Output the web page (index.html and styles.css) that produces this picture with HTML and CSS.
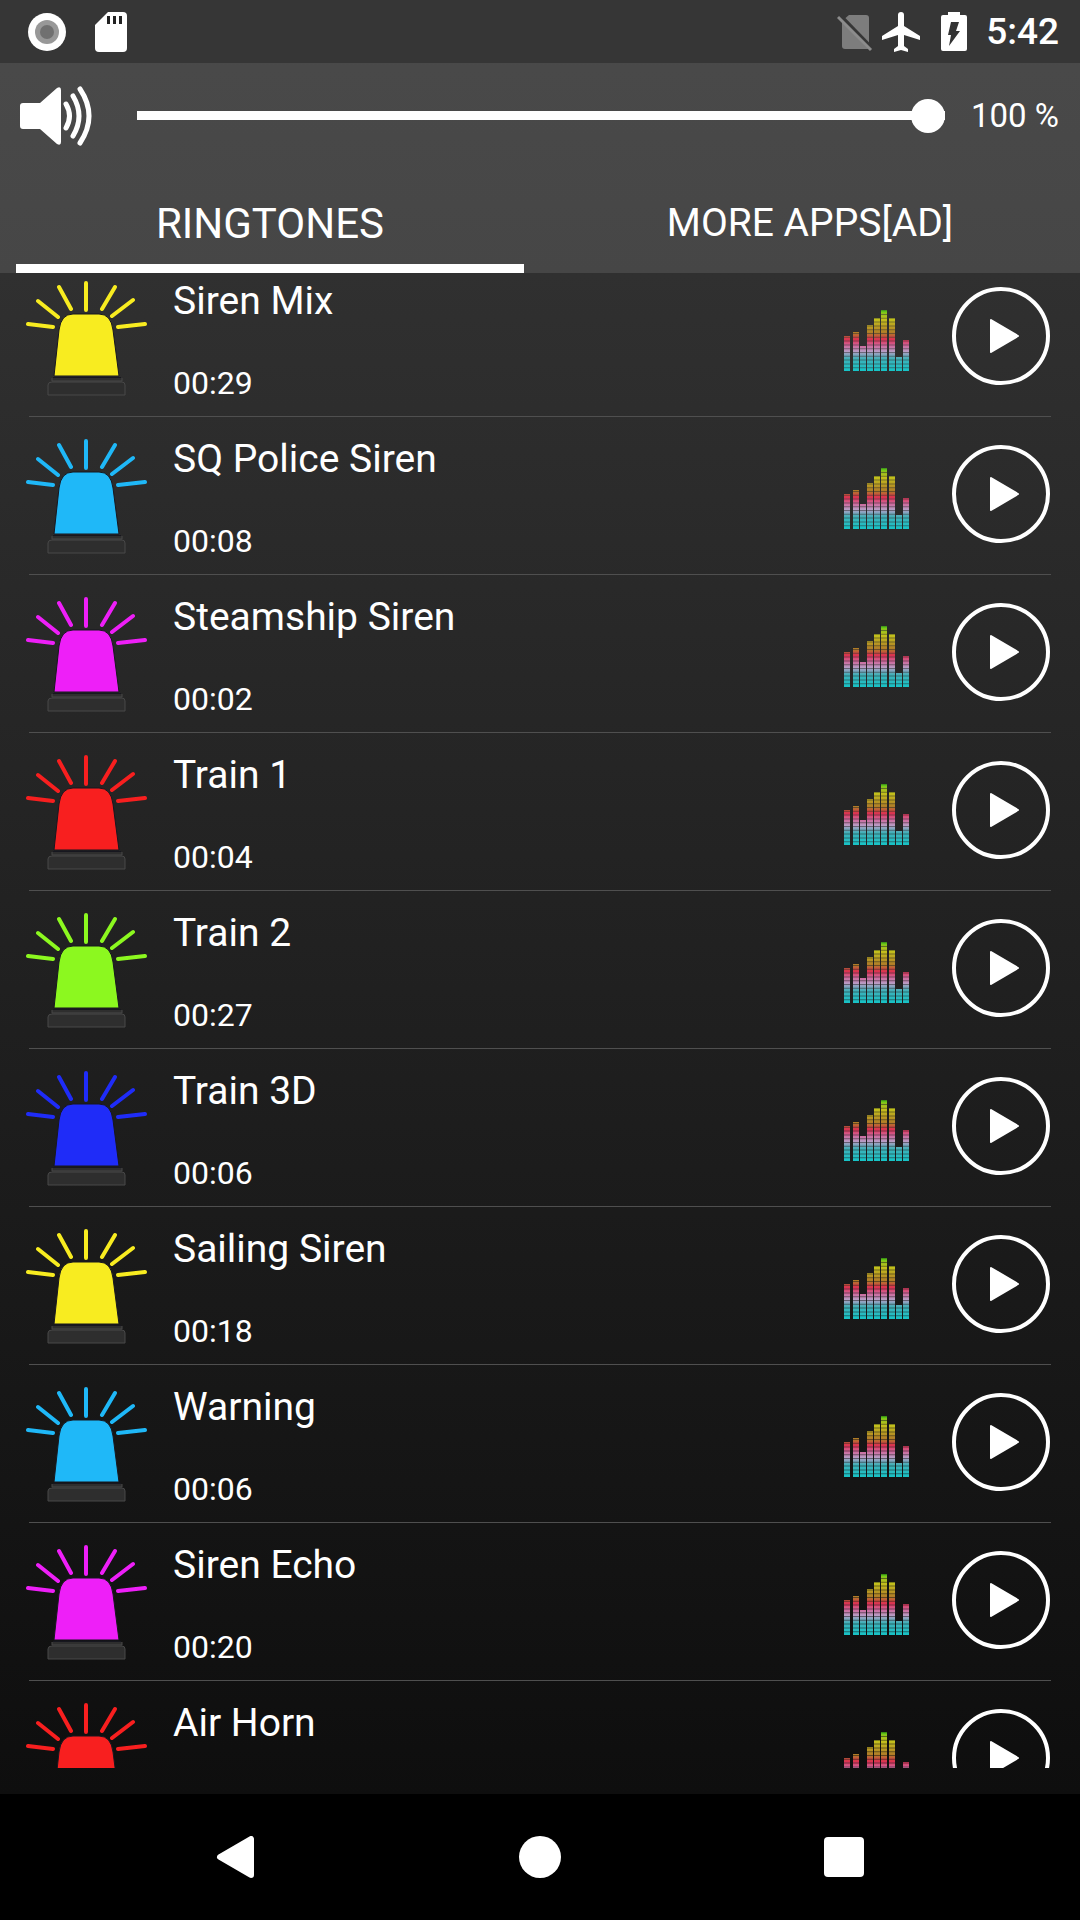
FILE: index.html
```html
<!DOCTYPE html>
<html lang="en">
  <head>
    <meta charset="UTF-8" />
    <meta name="viewport" content="width=device-width, initial-scale=1.0" />
    <title>Siren Ringtones</title>
    <link rel="stylesheet" href="styles.css">
  </head>
  <body>
    <svg class="sprite" aria-hidden="true">
      <defs>
        <linearGradient id="levels" gradientUnits="userSpaceOnUse" x1="0" y1="61" x2="0" y2="0">
          <stop offset="0" stop-color="#16c3c6" />
          <stop offset="0.2" stop-color="#3fb0b8" />
          <stop offset="0.32" stop-color="#b79cc4" />
          <stop offset="0.42" stop-color="#d0659a" />
          <stop offset="0.52" stop-color="#dd3050" />
          <stop offset="0.62" stop-color="#b07a28" />
          <stop offset="0.85" stop-color="#c3c21c" />
          <stop offset="0.94" stop-color="#8fbf1c" />
          <stop offset="1" stop-color="#4be010" />
        </linearGradient>
        <path id="bars" d="M3 61V26M12 61V22M19 61V36M26 61V15M33 61V8M40 61V0M48 61V8M55 61V47M62 61V30" />
      </defs>
      <symbol id="siren" viewBox="0 0 122 120">
        <path d="M2 43L27 46M12 20L32 36M33 6L45 28M60 2V29M89 6L76 28M107 19L86 35M119 43L92 46" fill="none" stroke="currentColor" stroke-width="4" stroke-linecap="round" />
        <path d="M28 95L33 49Q35 33 47 33H73Q85 33 87 49L93 95Z" fill="currentColor" stroke="#17171f" stroke-width="1" />
        <path d="M27 96H95V99H27Z" fill="#17171f" />
        <path d="M26 97V100H96V97M22 114V104Q22 101 26 101H96Q99 101 99 104V114Z" fill="#2e2e2e" stroke="#484848" stroke-width="1" />
      </symbol>
      <symbol id="equalizer" viewBox="0 0 66 61">
        <g fill="none" stroke="url(#levels)" stroke-width="6">
          <use href="#bars" stroke-opacity="0.5" />
          <use href="#bars" stroke-dasharray="2.8 1" />
        </g>
      </symbol>
      <symbol id="play" viewBox="0 0 100 100">
        <circle cx="50" cy="50" r="47" fill="none" stroke="#fff" stroke-width="4" />
        <path d="M40 34L67 50L40 66Z" fill="#fff" stroke="#fff" stroke-width="2" stroke-linejoin="round" />
      </symbol>
    </svg>

    <header>
      <div class="statusBar">
        <svg width="40" height="40" viewBox="0 0 40 40">
          <circle cx="20" cy="20" r="19" fill="#fff" />
          <circle cx="20" cy="20" r="12" fill="#989898" />
          <circle cx="20" cy="20" r="7" fill="#707070" />
        </svg>
        <svg class="sdCard" width="32" height="40" viewBox="0 0 32 40">
          <path d="M13 0H28Q32 0 32 4V36Q32 40 28 40H4Q0 40 0 36V13Z" fill="#fff" />
          <path d="M12 4H15V12H12ZM18 4H21V12H18ZM24 4H27V12H24Z" fill="#222" />
        </svg>
        <div class="statusRight">
          <svg width="36" height="40" viewBox="0 0 36 40">
            <path d="M12 3H29Q32 3 32 6V37H8Q5 37 5 34V9Z" fill="#7d7d7d" />
            <path d="M2 3L36 38" stroke="#363636" stroke-width="5" />
            <path d="M1 5L34 38" stroke="#8c8c8c" stroke-width="3" />
          </svg>
          <svg width="40" height="40" viewBox="0 0 40 40">
            <path d="M39 28V24L23 14V3A3 3 0 0 0 17 3V14L1 24V28L17 23V34L13 37V40L20 38L27 40V37L23 34V23Z" fill="#fff" />
          </svg>
          <svg class="battery" width="26" height="40" viewBox="0 0 26 40">
            <path d="M7 0H19V3H24Q26 3 26 5V37Q26 39 24 39H2Q0 39 0 37V5Q0 3 2 3H7Z" fill="#fff" />
            <path d="M10 10H18L15 19H19L8 34L10 23H7Z" fill="#333" />
          </svg>
          <span class="clock">5:42</span>
        </div>
      </div>

      <div class="volume">
        <svg width="76" height="60" viewBox="0 0 76 60">
          <path d="M5 17H22L39 2Q43 0 43 4V56Q43 60 39 58L22 43H5Q2 43 2 40V20Q2 17 5 17Z" fill="#fff" />
          <path d="M48 18Q55 30 48 42M55 10Q67 30 55 50M62 3Q80 30 62 57" fill="none" stroke="#fff" stroke-width="5" stroke-linecap="round" />
        </svg>
        <input type="range" min="0" max="100" value="100" aria-label="Volume" />
        <span>100 %</span>
      </div>

      <nav class="tabs">
        <button class="tab active" type="button">RINGTONES</button>
        <button class="tab" type="button">MORE APPS[AD]</button>
      </nav>
    </header>

    <main>
      <ul class="toneList">
        <li class="yellow">
          <svg class="siren"><use href="#siren" /></svg>
          <div class="toneText"><h2>Siren Mix</h2><p>00:29</p></div>
          <svg class="equalizer"><use href="#equalizer" /></svg>
          <button class="play" type="button" aria-label="Play Siren Mix"><svg><use href="#play" /></svg></button>
        </li>
        <li class="cyan">
          <svg class="siren"><use href="#siren" /></svg>
          <div class="toneText"><h2>SQ Police Siren</h2><p>00:08</p></div>
          <svg class="equalizer"><use href="#equalizer" /></svg>
          <button class="play" type="button" aria-label="Play SQ Police Siren"><svg><use href="#play" /></svg></button>
        </li>
        <li class="magenta">
          <svg class="siren"><use href="#siren" /></svg>
          <div class="toneText"><h2>Steamship Siren</h2><p>00:02</p></div>
          <svg class="equalizer"><use href="#equalizer" /></svg>
          <button class="play" type="button" aria-label="Play Steamship Siren"><svg><use href="#play" /></svg></button>
        </li>
        <li class="red">
          <svg class="siren"><use href="#siren" /></svg>
          <div class="toneText"><h2>Train 1</h2><p>00:04</p></div>
          <svg class="equalizer"><use href="#equalizer" /></svg>
          <button class="play" type="button" aria-label="Play Train 1"><svg><use href="#play" /></svg></button>
        </li>
        <li class="green">
          <svg class="siren"><use href="#siren" /></svg>
          <div class="toneText"><h2>Train 2</h2><p>00:27</p></div>
          <svg class="equalizer"><use href="#equalizer" /></svg>
          <button class="play" type="button" aria-label="Play Train 2"><svg><use href="#play" /></svg></button>
        </li>
        <li class="blue">
          <svg class="siren"><use href="#siren" /></svg>
          <div class="toneText"><h2>Train 3D</h2><p>00:06</p></div>
          <svg class="equalizer"><use href="#equalizer" /></svg>
          <button class="play" type="button" aria-label="Play Train 3D"><svg><use href="#play" /></svg></button>
        </li>
        <li class="yellow">
          <svg class="siren"><use href="#siren" /></svg>
          <div class="toneText"><h2>Sailing Siren</h2><p>00:18</p></div>
          <svg class="equalizer"><use href="#equalizer" /></svg>
          <button class="play" type="button" aria-label="Play Sailing Siren"><svg><use href="#play" /></svg></button>
        </li>
        <li class="cyan">
          <svg class="siren"><use href="#siren" /></svg>
          <div class="toneText"><h2>Warning</h2><p>00:06</p></div>
          <svg class="equalizer"><use href="#equalizer" /></svg>
          <button class="play" type="button" aria-label="Play Warning"><svg><use href="#play" /></svg></button>
        </li>
        <li class="magenta">
          <svg class="siren"><use href="#siren" /></svg>
          <div class="toneText"><h2>Siren Echo</h2><p>00:20</p></div>
          <svg class="equalizer"><use href="#equalizer" /></svg>
          <button class="play" type="button" aria-label="Play Siren Echo"><svg><use href="#play" /></svg></button>
        </li>
        <li class="red">
          <svg class="siren"><use href="#siren" /></svg>
          <div class="toneText"><h2>Air Horn</h2></div>
          <svg class="equalizer"><use href="#equalizer" /></svg>
          <button class="play" type="button" aria-label="Play Air Horn"><svg><use href="#play" /></svg></button>
        </li>
      </ul>
    </main>

    <footer>
      <button type="button" aria-label="Back">
        <svg width="42" height="42" viewBox="0 0 42 42">
          <path d="M5 21L36 3V39Z" fill="#fff" stroke="#fff" stroke-width="6" stroke-linejoin="round" />
        </svg>
      </button>
      <button type="button" aria-label="Home">
        <svg width="42" height="42" viewBox="0 0 42 42">
          <circle cx="21" cy="21" r="21" fill="#fff" />
        </svg>
      </button>
      <button type="button" aria-label="Recent apps">
        <svg width="42" height="42" viewBox="0 0 42 42">
          <rect x="1" y="1" width="40" height="40" rx="4" fill="#fff" />
        </svg>
      </button>
    </footer>
  </body>
</html>
```
FILE: styles.css
```css
* {
  box-sizing: border-box;
}

body {
  margin: 0;
  height: 100vh;
  display: flex;
  flex-direction: column;
  background: #000;
  font-family: Roboto, 'Liberation Sans', sans-serif;
  color: #fff;
}

svg {
  display: block;
  flex: none;
}

.sprite {
  position: absolute;
  width: 0;
  height: 0;
}

button {
  border: 0;
  padding: 0;
  background: none;
  color: inherit;
  font-family: inherit;
}

header {
  flex: none;
  background: linear-gradient(#4a4a4a, #464646);
}

.statusBar {
  display: flex;
  align-items: center;
  height: 63px;
  padding: 0 21px 0 27px;
  background-color: #363636;
}

.sdCard {
  margin-left: 28px;
}

.statusRight {
  display: flex;
  align-items: center;
  gap: 8px;
  margin-left: auto;
}

.battery {
  margin: 0 11px 0 12px;
}

.clock {
  font-size: 37px;
  font-weight: 500;
  line-height: 40px;
}

.volume {
  display: flex;
  align-items: center;
  height: 105px;
  padding: 0 21px 0 18px;
  font-size: 33px;
}

.volume input {
  appearance: none;
  flex: 1;
  min-width: 0;
  height: 34px;
  margin: 0 26px 0 43px;
  background: linear-gradient(#fff, #fff) center / 100% 9px no-repeat;
  border-radius: 5px;
}

.volume input::-webkit-slider-thumb {
  appearance: none;
  width: 34px;
  height: 34px;
  border-radius: 50%;
  background-color: #fff;
}

.tabs {
  display: flex;
  gap: 32px;
  height: 105px;
  padding: 0 16px;
}

.tab {
  flex: 1;
  padding-top: 14px;
  border-bottom: 9px solid transparent;
  font-size: 39px;
}

.active {
  border-bottom-color: #fff;
  font-size: 42px;
}

main {
  flex: 1;
  min-height: 0;
  padding-bottom: 26px;
  background: linear-gradient(#303030, #0e0e0e);
}

.toneList {
  display: flex;
  flex-direction: column;
  gap: 22px;
  height: 100%;
  margin: 0;
  padding: 8px 29px 0;
  overflow: hidden;
  list-style: none;
}

.toneList li {
  display: flex;
  flex: none;
  height: 136px;
  border-bottom: 1px solid #4f4f4f;
}

.siren {
  width: 122px;
  height: 120px;
  margin-left: -3px;
}

.toneText {
  flex: 1;
  margin-left: 25px;
}

h2 {
  margin: 0 0 42px;
  font-size: 39px;
  line-height: 40px;
  font-weight: 400;
}

p {
  margin: 0;
  font-size: 32px;
  line-height: 40px;
}

.equalizer {
  width: 66px;
  height: 61px;
  margin: 29px 41px 0 0;
}

.play {
  width: 100px;
  height: 100px;
  margin-top: 5px;
}

.play svg {
  width: 100px;
  height: 100px;
}

.yellow {
  color: #f8ec20;
}

.cyan {
  color: #1fb8f8;
}

.magenta {
  color: #ee1ff8;
}

.red {
  color: #f81f1f;
}

.green {
  color: #8cf81f;
}

.blue {
  color: #1f2cf8;
}

.toneText {
  color: #fff;
}

footer {
  display: grid;
  grid-template-columns: repeat(3, 1fr);
  flex: none;
  height: 126px;
  padding: 0 84px;
  background-color: #000;
}

footer svg {
  margin: 0 auto;
}
```
